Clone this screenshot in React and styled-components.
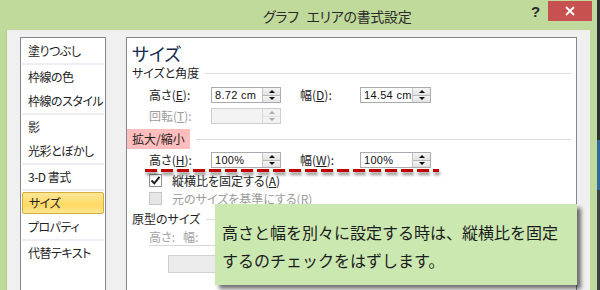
import React from 'react'
import styled, { createGlobalStyle } from 'styled-components'

const GlobalStyle = createGlobalStyle`
  html, body {
    margin: 0;
    padding: 0;
  }
  body {
    width: 600px;
    height: 290px;
    overflow: hidden;
    background: #2d3338;
    font-family: "Noto Sans CJK JP", "Noto Sans", sans-serif;
    color: #1e1e1e;
  }
`

const Screen = styled.div`
  display: flex;
  width: 600px;
  height: 290px;
  overflow: hidden;
`

const Window = styled.div`
  position: relative;
  width: 597px;
  height: 290px;
  background: #c0da9c;
  display: flex;
  flex-direction: column;
`

const Edge = styled.div`
  width: 3px;
  background: linear-gradient(180deg, #2b3034 0, #2b3034 140px, #2e6aa2 140px, #2e6aa2 190px, #3a4046 190px);
`

const TitleBar = styled.div`
  height: 30px;
  flex-shrink: 0;
  display: flex;
  align-items: flex-start;
`

const Title = styled.div`
  flex: 1;
  padding-left: 263px;
  padding-top: 6px;
  font-size: 14px;
  line-height: 20px;
  letter-spacing: -0.3px;
  word-spacing: 5px;
  white-space: pre;
  color: #2a2a2a;
  font-feature-settings: "palt";
`

const Help = styled.div`
  width: 13px;
  margin-right: 6px;
  padding-top: 3px;
  font-family: "Liberation Sans", sans-serif;
  font-weight: bold;
  font-size: 15px;
  line-height: 18px;
  text-align: center;
  color: #2a2a2a;
`

const Close = styled.div`
  width: 44px;
  height: 20px;
  margin-top: 1px;
  margin-right: 5px;
  background: #c75050;
  display: flex;
  align-items: center;
  justify-content: center;
`

const Body = styled.div`
  flex: 1;
  min-height: 0;
  margin: 0 7px 0 6px;
  padding: 7px 13px 0;
  background: #f0f0f0;
  border-left: 1px solid #b3cc8f;
  display: flex;
  gap: 20px;
  overflow: hidden;
`

const NavList = styled.div`
  width: 84px;
  height: 270px;
  flex-shrink: 0;
  background: #fff;
  border: 1px solid #828790;
  padding-top: 1px;
  display: flex;
  flex-direction: column;
`

const NavItem = styled.div`
  height: 24px;
  padding-left: 7px;
  font-size: 12px;
  line-height: 24px;
  letter-spacing: -0.5px;
  font-feature-settings: "palt";
  white-space: nowrap;
  overflow: hidden;
  color: #222;
`

const NavSelected = styled.div`
  height: 20px;
  margin: 1px 1px;
  padding-left: 6px;
  font-size: 12px;
  line-height: 20px;
  letter-spacing: -0.5px;
  font-feature-settings: "palt";
  color: #222;
  border: 1px solid #d9ac3c;
  border-radius: 2px;
  background: linear-gradient(180deg, #fde796 0%, #ffd964 60%, #ffe690 100%);
`

const NavSep = styled.div`
  height: 2px;
  margin: 0 1px;
  background: #eceef3;
`

const Panel = styled.div`
  width: 439px;
  height: 266px;
  flex-shrink: 0;
  background: #fff;
  border: 1px solid #828790;
  padding: 4px 5px 0;
  display: flex;
  flex-direction: column;
`

const Heading = styled.div`
  height: 22px;
  font-size: 18px;
  line-height: 22px;
  color: #142a4e;
  font-feature-settings: "palt";
`

const Group = styled.div`
  height: ${p => (p.tall ? 20 : 18)}px;
  margin-top: ${p => p.top || 0}px;
  display: flex;
  align-items: center;
  gap: 6px;
  font-size: 12px;
  font-feature-settings: "palt";
  white-space: nowrap;
`

const GroupText = styled.span`
  line-height: 18px;
`

const Marked = styled.span`
  margin-left: -5px;
  padding: 0 5px;
  height: 20px;
  line-height: 20px;
  background: #ffbdbd;
`

const Rule = styled.div`
  flex: 1;
  height: 1px;
  background: #dcdcdc;
`

const Row = styled.div`
  height: 16px;
  margin-top: ${p => p.top || 0}px;
  padding-left: 17px;
  display: flex;
  align-items: center;
`

const Label = styled.div`
  width: ${p => p.w}px;
  margin-left: ${p => p.gap || 0}px;
  font-size: 12px;
  line-height: 16px;
  font-feature-settings: "palt";
  white-space: nowrap;
  color: ${p => (p.off ? '#9c9c9c' : '#222')};
`

const Spin = styled.div`
  width: ${p => p.w}px;
  height: 16px;
  box-sizing: border-box;
  border: 1px solid ${p => (p.off ? '#cdcdcd' : '#a9abb0')};
  background: ${p => (p.off ? '#f3f3f3' : '#fff')};
  display: flex;
`

const SpinValue = styled.div`
  flex: 1;
  min-width: 0;
  padding-left: 3px;
  font-family: "Liberation Sans", Arial, sans-serif;
  font-size: 11px;
  line-height: 14px;
  letter-spacing: 0.3px;
  color: #111;
  white-space: nowrap;
  overflow: hidden;
`

const Stepper = styled.div`
  width: 17px;
  flex-shrink: 0;
  display: flex;
  flex-direction: column;
  border-left: 1px solid ${p => (p.off ? '#dadada' : '#c3c3c3')};
`

const Step = styled.div`
  flex: 1;
  display: flex;
  align-items: center;
  justify-content: center;
  background: ${p => (p.off ? '#f1f1f1' : 'linear-gradient(180deg, #f4f4f4, #e2e2e2)')};
  border-top: ${p => (p.down ? `1px solid ${p.off ? '#dedede' : '#b7b7b7'}` : 'none')};
`

const Arrow = styled.div`
  width: 0;
  height: 0;
  border-left: 3px solid transparent;
  border-right: 3px solid transparent;
  ${p => (p.down ? 'border-top' : 'border-bottom')}: 3px solid ${p => (p.off ? '#a9a9a9' : '#111')};
`

const CheckRow = styled.div`
  height: 18px;
  margin-top: ${p => p.top || 0}px;
  padding-left: 17px;
  display: flex;
  align-items: center;
  gap: 10px;
  font-size: 12px;
  font-feature-settings: "palt";
  white-space: nowrap;
  color: ${p => (p.off ? '#9c9c9c' : '#222')};
`

const Box = styled.div`
  width: 13px;
  height: 13px;
  box-sizing: border-box;
  border: 1px solid ${p => (p.off ? '#c6c6c6' : '#8f8f8f')};
  background: ${p => (p.off ? '#e6e6e6' : '#fff')};
  display: flex;
  align-items: center;
  justify-content: center;
`

const SizeRow = styled.div`
  width: 260px;
  height: 16px;
  margin-top: 1px;
  margin-left: 17px;
  border-bottom: 1px solid #d6d6d6;
  display: flex;
  align-items: center;
`

const Dull = styled.div`
  width: ${p => p.w}px;
  font-size: 12px;
  line-height: 16px;
  color: #a3a3a3;
  font-feature-settings: "palt";
`

const DeadButton = styled.div`
  width: 120px;
  height: 18px;
  margin-top: 9px;
  margin-left: 36px;
  box-sizing: border-box;
  border: 1px solid #d0d0d0;
  background: #ececec;
`

const DashLine = styled.div`
  position: absolute;
  left: 145px;
  top: 169px;
  width: 294px;
  height: 3px;
  background: repeating-linear-gradient(90deg, #c40000 0 12px, transparent 12px 16px);
  filter: drop-shadow(1px 3px 1.5px rgba(0, 0, 0, 0.45));
`

const Callout = styled.div`
  position: absolute;
  left: 215px;
  top: 204px;
  width: 362px;
  height: 81px;
  box-sizing: border-box;
  padding: 14px 0 0 7px;
  background: #cae8b0;
  box-shadow: 4px 4px 4px rgba(0, 0, 0, 0.55);
  font-size: 16px;
  line-height: 28px;
  color: #1c1c1c;
  white-space: nowrap;
`

const Key = ({ k }) => (
  <>
    (<u>{k}</u>)
  </>
)

function SpinBox({ w, value, off }) {
  return (
    <Spin w={w} off={off}>
      <SpinValue>{value}</SpinValue>
      <Stepper off={off}>
        <Step off={off}>
          <Arrow off={off} />
        </Step>
        <Step off={off} down>
          <Arrow off={off} down />
        </Step>
      </Stepper>
    </Spin>
  )
}

const navGroups = [
  ['塗りつぶし'],
  ['枠線の色', '枠線のスタイル'],
  ['影', '光彩とぼかし'],
  ['3-D 書式'],
  ['サイズ', 'プロパティ'],
  ['代替テキスト'],
]

export default function App() {
  return (
    <Screen>
      <GlobalStyle />
      <Window>
        <TitleBar>
          <Title>グラフ エリアの書式設定</Title>
          <Help>?</Help>
          <Close>
            <svg width="10" height="10" viewBox="0 0 10 10">
              <path d="M1 1 L9 9 M9 1 L1 9" stroke="#fff" strokeWidth="1.8" />
            </svg>
          </Close>
        </TitleBar>
        <Body>
          <NavList>
            {navGroups.map((group, gi) => (
              <React.Fragment key={gi}>
                {gi > 0 && <NavSep />}
                {group.map(name =>
                  name === 'サイズ' ? (
                    <NavSelected key={name}>{name}</NavSelected>
                  ) : (
                    <NavItem key={name}>{name}</NavItem>
                  )
                )}
              </React.Fragment>
            ))}
          </NavList>
          <Panel>
            <Heading>サイズ</Heading>
            <Group>
              <GroupText>サイズと角度</GroupText>
              <Rule />
            </Group>
            <Row top={5}>
              <Label w={62}>高さ<Key k="E" />:</Label>
              <SpinBox w={70} value="8.72 cm" />
              <Label w={60} gap={19}>幅<Key k="D" />:</Label>
              <SpinBox w={71} value="14.54 cm" />
            </Row>
            <Row top={5}>
              <Label w={62} off>回転<Key k="T" />:</Label>
              <SpinBox w={70} value="" off />
            </Row>
            <Group tall top={5}>
              <Marked>拡大/縮小</Marked>
              <Rule />
            </Group>
            <Row top={3}>
              <Label w={62}>高さ<Key k="H" />:</Label>
              <SpinBox w={70} value="100%" />
              <Label w={60} gap={19}>幅<Key k="W" />:</Label>
              <SpinBox w={71} value="100%" />
            </Row>
            <CheckRow top={3}>
              <Box>
                <svg width="11" height="11" viewBox="0 0 11 11">
                  <path d="M1.5 5.5 L4.3 8.4 L9.5 1.8" stroke="#1a1a1a" strokeWidth="1.9" fill="none" />
                </svg>
              </Box>
              <span>縦横比を固定する<Key k="A" /></span>
            </CheckRow>
            <CheckRow off>
              <Box off />
              <span>元のサイズを基準にする<Key k="R" /></span>
            </CheckRow>
            <Group top={3}>
              <GroupText>原型のサイズ</GroupText>
              <Rule />
            </Group>
            <SizeRow>
              <Dull w={34}>高さ:</Dull>
              <Dull w={30}>幅:</Dull>
            </SizeRow>
            <DeadButton />
          </Panel>
        </Body>
        <DashLine />
        <Callout>
          高さと幅を別々に設定する時は、縦横比を固定
          <br />
          するのチェックをはずします。
        </Callout>
      </Window>
      <Edge />
    </Screen>
  )
}
